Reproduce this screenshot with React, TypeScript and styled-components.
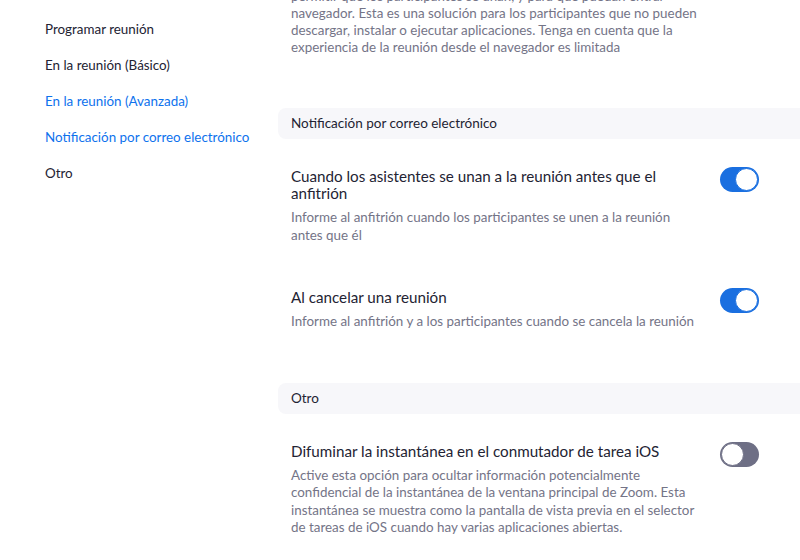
import styled, { createGlobalStyle } from "styled-components";

const GlobalStyle = createGlobalStyle`
  html, body {
    margin: 0;
    padding: 0;
    background: #ffffff;
    overflow: hidden;
  }
  body {
    font-family: Lato, "Open Sans", "Liberation Sans", sans-serif;
    color: #232333;
    -webkit-font-smoothing: antialiased;
  }
`;

type NavItem = { label: string; active?: boolean };

const navItems: NavItem[] = [
  { label: "Programar reunión" },
  { label: "En la reunión (Básico)" },
  { label: "En la reunión (Avanzada)", active: true },
  { label: "Notificación por correo electrónico", active: true },
  { label: "Otro" },
];

type Setting = { title: string; description: string; on: boolean };

const emailSettings: Setting[] = [
  {
    title: "Cuando los asistentes se unan a la reunión antes que el anfitrión",
    description: "Informe al anfitrión cuando los participantes se unen a la reunión antes que él",
    on: true,
  },
  {
    title: "Al cancelar una reunión",
    description: "Informe al anfitrión y a los participantes cuando se cancela la reunión",
    on: true,
  },
];

const otherSettings: Setting[] = [
  {
    title: "Difuminar la instantánea en el conmutador de tarea iOS",
    description:
      "Active esta opción para ocultar información potencialmente confidencial de la instantánea de la ventana principal de Zoom. Esta instantánea se muestra como la pantalla de vista previa en el selector de tareas de iOS cuando hay varias aplicaciones abiertas.",
    on: false,
  },
];

function Toggle({ on }: { on: boolean }) {
  return (
    <Switch $on={on}>
      <Knob $on={on} />
    </Switch>
  );
}

function SettingRow({ setting }: { setting: Setting }) {
  return (
    <Row>
      <RowText>
        <RowTitle>{setting.title}</RowTitle>
        <RowDesc>{setting.description}</RowDesc>
      </RowText>
      <Toggle on={setting.on} />
    </Row>
  );
}

export default function App() {
  return (
    <>
      <GlobalStyle />
      <Page>
        <Sidebar>
          {navItems.map((item) => (
            <NavLink key={item.label} $active={item.active}>
              {item.label}
            </NavLink>
          ))}
        </Sidebar>
        <Main>
          <Lead>
            permitir que los participantes se unan, y para que puedan entrar
            <br />
            navegador. Esta es una solución para los participantes que no pueden descargar, instalar
            o ejecutar aplicaciones. Tenga en cuenta que la experiencia de la reunión desde el
            navegador es limitada
          </Lead>
          <Section>
            <SectionHeader>Notificación por correo electrónico</SectionHeader>
            <Rows>
              {emailSettings.map((s) => (
                <SettingRow key={s.title} setting={s} />
              ))}
            </Rows>
          </Section>
          <Section>
            <SectionHeader>Otro</SectionHeader>
            <Rows>
              {otherSettings.map((s) => (
                <SettingRow key={s.title} setting={s} />
              ))}
            </Rows>
          </Section>
        </Main>
      </Page>
    </>
  );
}

const Page = styled.div`
  display: flex;
  width: 800px;
  height: 560px;
  overflow: hidden;
`;

const Sidebar = styled.nav`
  width: 278px;
  flex-shrink: 0;
  padding: 11px 0 0 45px;
  box-sizing: border-box;
  display: flex;
  flex-direction: column;
`;

const NavLink = styled.a<{ $active?: boolean }>`
  font-size: 13.4px;
  line-height: 36px;
  color: ${(p) => (p.$active ? "#0e72ed" : "#232333")};
  cursor: pointer;
  white-space: nowrap;
`;

const Main = styled.main`
  flex: 1;
  min-width: 0;
  display: flex;
  flex-direction: column;
`;

const Lead = styled.p`
  margin: -12px 0 0;
  padding: 0 0 0 13px;
  max-width: 412px;
  font-size: 13.4px;
  line-height: 17px;
  color: #747487;
`;

const Section = styled.section`
  margin-top: 52px;
  display: flex;
  flex-direction: column;
`;

const SectionHeader = styled.div`
  height: 31px;
  line-height: 31px;
  padding-left: 13px;
  margin-right: -12px;
  border-radius: 8px 0 0 8px;
  background: #f7f7fa;
  font-size: 13.5px;
  color: #232333;
`;

const Rows = styled.div`
  padding-top: 29px;
  display: flex;
  flex-direction: column;
  gap: 45px;
`;

const Row = styled.div`
  display: flex;
  align-items: flex-start;
  justify-content: space-between;
  padding: 0 41px 0 13px;
`;

const RowText = styled.div`
  max-width: 405px;
  display: flex;
  flex-direction: column;
  gap: 7px;
`;

const RowTitle = styled.div`
  font-size: 15.2px;
  line-height: 17px;
  color: #232333;
`;

const RowDesc = styled.div`
  font-size: 13.4px;
  line-height: 17.5px;
  color: #747487;
`;

const Switch = styled.div<{ $on: boolean }>`
  flex-shrink: 0;
  width: 39px;
  height: 25px;
  margin-top: -1px;
  border-radius: 13px;
  background: ${(p) => (p.$on ? "#1a6fe0" : "#6e6f85")};
  display: flex;
  align-items: center;
  justify-content: ${(p) => (p.$on ? "flex-end" : "flex-start")};
  padding: 1px;
  box-sizing: border-box;
`;

const Knob = styled.div<{ $on: boolean }>`
  width: 23px;
  height: 23px;
  border-radius: 50%;
  background: #ffffff;
  box-sizing: border-box;
  border: 1px solid ${(p) => (p.$on ? "#1a6fe0" : "#6e6f85")};
`;
